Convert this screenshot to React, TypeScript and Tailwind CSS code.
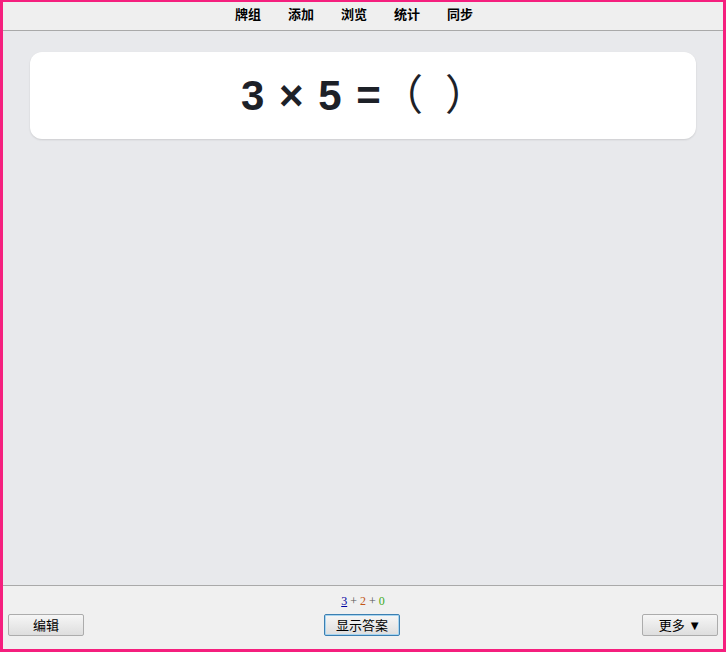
import React from "react";

const cjk = '"Liberation Sans", "Noto Sans CJK SC", sans-serif';

function Btn({ children, focused, className }: { children: React.ReactNode; focused?: boolean; className?: string }) {
  return (
    <button
      className={
        "h-[22px] w-[76px] rounded-[2px] border text-[13px] leading-none text-black bg-gradient-to-b from-[#f6f6f6] to-[#dedede] " +
        (focused ? "border-[#3c7fb1] shadow-[inset_0_0_0_1px_#a6d4f0]" : "border-[#acacac]") +
        " " +
        (className ?? "")
      }
      style={{ fontFamily: cjk }}
    >
      {children}
    </button>
  );
}

export default function App() {
  return (
    <div className="w-[726px] h-[652px] border-[3px] border-t-2 border-[#f51f7e] flex flex-col bg-[#e8e9ec] overflow-hidden">
      <div
        className="h-[29px] shrink-0 bg-[#efefef] border-b border-[#a9a9a9] flex justify-center items-center gap-[27px] pr-[18px] pb-[2px] text-[13px] font-bold text-black"
        style={{ fontFamily: cjk }}
      >
        <span>牌组</span>
        <span>添加</span>
        <span>浏览</span>
        <span>统计</span>
        <span>同步</span>
      </div>
      <div className="flex-1 px-[27px] pt-[21px]">
        <div className="h-[87px] bg-white rounded-[12px] shadow-[0_1px_2px_rgba(0,0,0,0.12)] flex items-center justify-center">
          <span
            className="text-[42px] font-bold text-[#1d2128] leading-none [word-spacing:3px] flex items-center ml-[2px]"
            style={{ fontFamily: '"Liberation Sans", Arial, "Noto Sans CJK SC", sans-serif' }}
          >
            <span className="whitespace-pre">3 × 5 =</span>
            <span className="font-normal">（</span>
            <span className="inline-block w-[22px]" />
            <span className="font-normal">）</span>
          </span>
        </div>
      </div>
      <div className="h-[64px] shrink-0 bg-[#f0f0f0] border-t border-[#a9a9a9] flex flex-col">
        <div
          className="text-center text-[12px] leading-none mt-[9px] text-[#555]"
          style={{ fontFamily: '"Liberation Serif", serif' }}
        >
          <span className="text-[#0000a0] underline">3</span>
          <span> + </span>
          <span className="text-[#c35617]">2</span>
          <span> + </span>
          <span className="text-[#3eab1f]">0</span>
        </div>
        <div className="flex items-center justify-between px-[5px] mt-[7px]">
          <Btn>编辑</Btn>
          <Btn focused className="ml-[-2px]">显示答案</Btn>
          <Btn>更多 ▼</Btn>
        </div>
      </div>
    </div>
  );
}
